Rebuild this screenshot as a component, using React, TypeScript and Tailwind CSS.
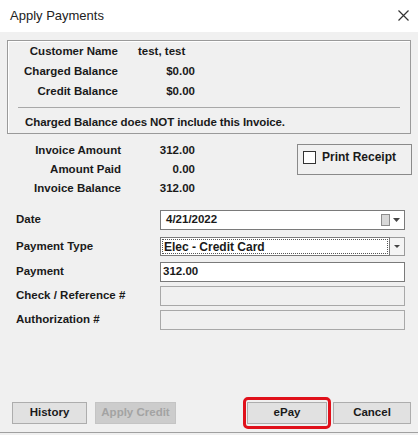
import React from "react";

const font = { fontFamily: '"Liberation Sans", Arial, sans-serif' };

function InfoRow({ label, value, alignRight = true }: { label: string; value: string; alignRight?: boolean }) {
  return (
    <div className="flex h-[20px] items-center">
      <div className="w-[110px] text-right">{label}</div>
      <div className={`ml-[20px] w-[57px] ${alignRight ? "text-right" : "text-left"}`}>{value}</div>
    </div>
  );
}

function AmountRow({ label, value }: { label: string; value: string }) {
  return (
    <div className="flex h-[19px] items-center">
      <div className="w-[121px] text-right">{label}</div>
      <div className="w-[74px] text-right">{value}</div>
    </div>
  );
}

function FieldRow({ label, children, mt }: { label: string; children: React.ReactNode; mt: string }) {
  return (
    <div className={`flex items-center ${mt}`}>
      <div className="w-[160px] pl-[16px]">{label}</div>
      {children}
    </div>
  );
}

export default function App() {
  return (
    <div style={font} className="relative h-[435px] w-[418px] overflow-hidden bg-[#f0f0f0] text-[11.5px] font-bold text-[#1a1a1a]">
      {/* title bar */}
      <div className="flex h-[32px] items-center justify-between bg-white pl-[10px] pr-[9px]">
        <span className="text-[13px] font-normal text-[#222]">Apply Payments</span>
        <svg width="11" height="11" viewBox="0 0 11 11" className="mb-[2px]">
          <path d="M0.5 0.5 L10.5 10.5 M10.5 0.5 L0.5 10.5" stroke="#333" strokeWidth="1.2" />
        </svg>
      </div>

      <div className="px-[7px] pt-[8px]">
        {/* customer group */}
        <div className="h-[94px] border border-[#9a9a9a] shadow-[inset_1px_1px_0_#fff]">
          <div className="pt-[1px]">
            <InfoRow label="Customer Name" value="test, test" alignRight={false} />
            <InfoRow label="Charged Balance" value="$0.00" />
            <InfoRow label="Credit Balance" value="$0.00" />
          </div>
          <div className="mx-[10px] mt-[5px] h-px bg-[#a8a8a8]" />
          <div className="mt-[6px] pl-[17px] tracking-[-0.1px]">Charged Balance does NOT include this Invoice.</div>
        </div>
      </div>

      {/* invoice amounts + print receipt */}
      <div className="mt-[7px] flex">
        <div>
          <AmountRow label="Invoice Amount" value="312.00" />
          <AmountRow label="Amount Paid" value="0.00" />
          <AmountRow label="Invoice Balance" value="312.00" />
        </div>
        <div className="ml-[102px] mt-[3px] flex h-[31px] w-[115px] items-start border border-[#8a8a8a] pl-[5px] pt-[6px]">
          <div className="h-[13px] w-[13px] border border-[#333] bg-white" />
          <span className="ml-[6px] text-[12px] leading-[13px]">Print Receipt</span>
        </div>
      </div>

      {/* payment fields */}
      <FieldRow label="Date" mt="mt-[12px]">
        <div className="flex h-[20px] w-[245px] items-center border border-[#7a7a7a] bg-white pl-[5px] pr-[4px]">
          <span className="flex-1">4/21/2022</span>
          <div className="h-[12px] w-[9px] border border-[#8c8c8c] bg-[#d8d8d8]" />
          <svg width="7" height="4" viewBox="0 0 7 4" className="ml-[3px]">
            <path d="M0 0 L7 0 L3.5 4 Z" fill="#444" />
          </svg>
        </div>
      </FieldRow>

      <FieldRow label="Payment Type" mt="mt-[7px]">
        <div className="flex h-[19px] w-[245px] items-stretch">
          <div className="flex flex-1 items-center border border-[#7a7a7a] bg-white p-[1px]">
            <div className="flex h-full w-full items-center border border-dotted border-[#555] pl-[1px] text-[12px]">Elec - Credit Card</div>
          </div>
          <div className="flex w-[15px] items-center justify-center border border-l-0 border-[#9a9a9a] bg-[#f4f4f4]">
            <svg width="6" height="3" viewBox="0 0 6 3">
              <path d="M0 0 L6 0 L3 3 Z" fill="#444" />
            </svg>
          </div>
        </div>
      </FieldRow>

      <FieldRow label="Payment" mt="mt-[6px]">
        <div className="flex h-[20px] w-[245px] items-center border border-[#7a7a7a] bg-white pl-[2px]">312.00</div>
      </FieldRow>

      <FieldRow label="Check / Reference #" mt="mt-[4px]">
        <div className="h-[20px] w-[245px] border border-[#a8a8a8] bg-[#f0f0f0]" />
      </FieldRow>

      <FieldRow label="Authorization #" mt="mt-[4px]">
        <div className="h-[20px] w-[245px] border border-[#a8a8a8] bg-[#f0f0f0]" />
      </FieldRow>

      {/* buttons */}
      <div className="mt-[72px] flex h-[22px] pl-[12px]">
        <div className="flex w-[75px] items-center justify-center border border-[#adadad] bg-[#e1e1e1]">History</div>
        <div className="ml-[8px] flex w-[81px] items-center justify-center border border-[#c4c4c4] bg-[#cccccc] text-[#a3a3a3]">Apply Credit</div>
        <div className="relative ml-[71px] w-[80px]">
          <div className="absolute -inset-x-[4px] -inset-y-[5px] rounded-[5px] border-[3px] border-[#e0101a]" />
          <div className="flex h-full w-full items-center justify-center border border-[#adadad] bg-[#e1e1e1]">ePay</div>
        </div>
        <div className="ml-[6px] flex w-[78px] items-center justify-center border border-[#adadad] bg-[#e1e1e1]">Cancel</div>
      </div>

      <div className="absolute bottom-[2px] left-0 h-px w-full bg-[#a0a0a0]" />
    </div>
  );
}
